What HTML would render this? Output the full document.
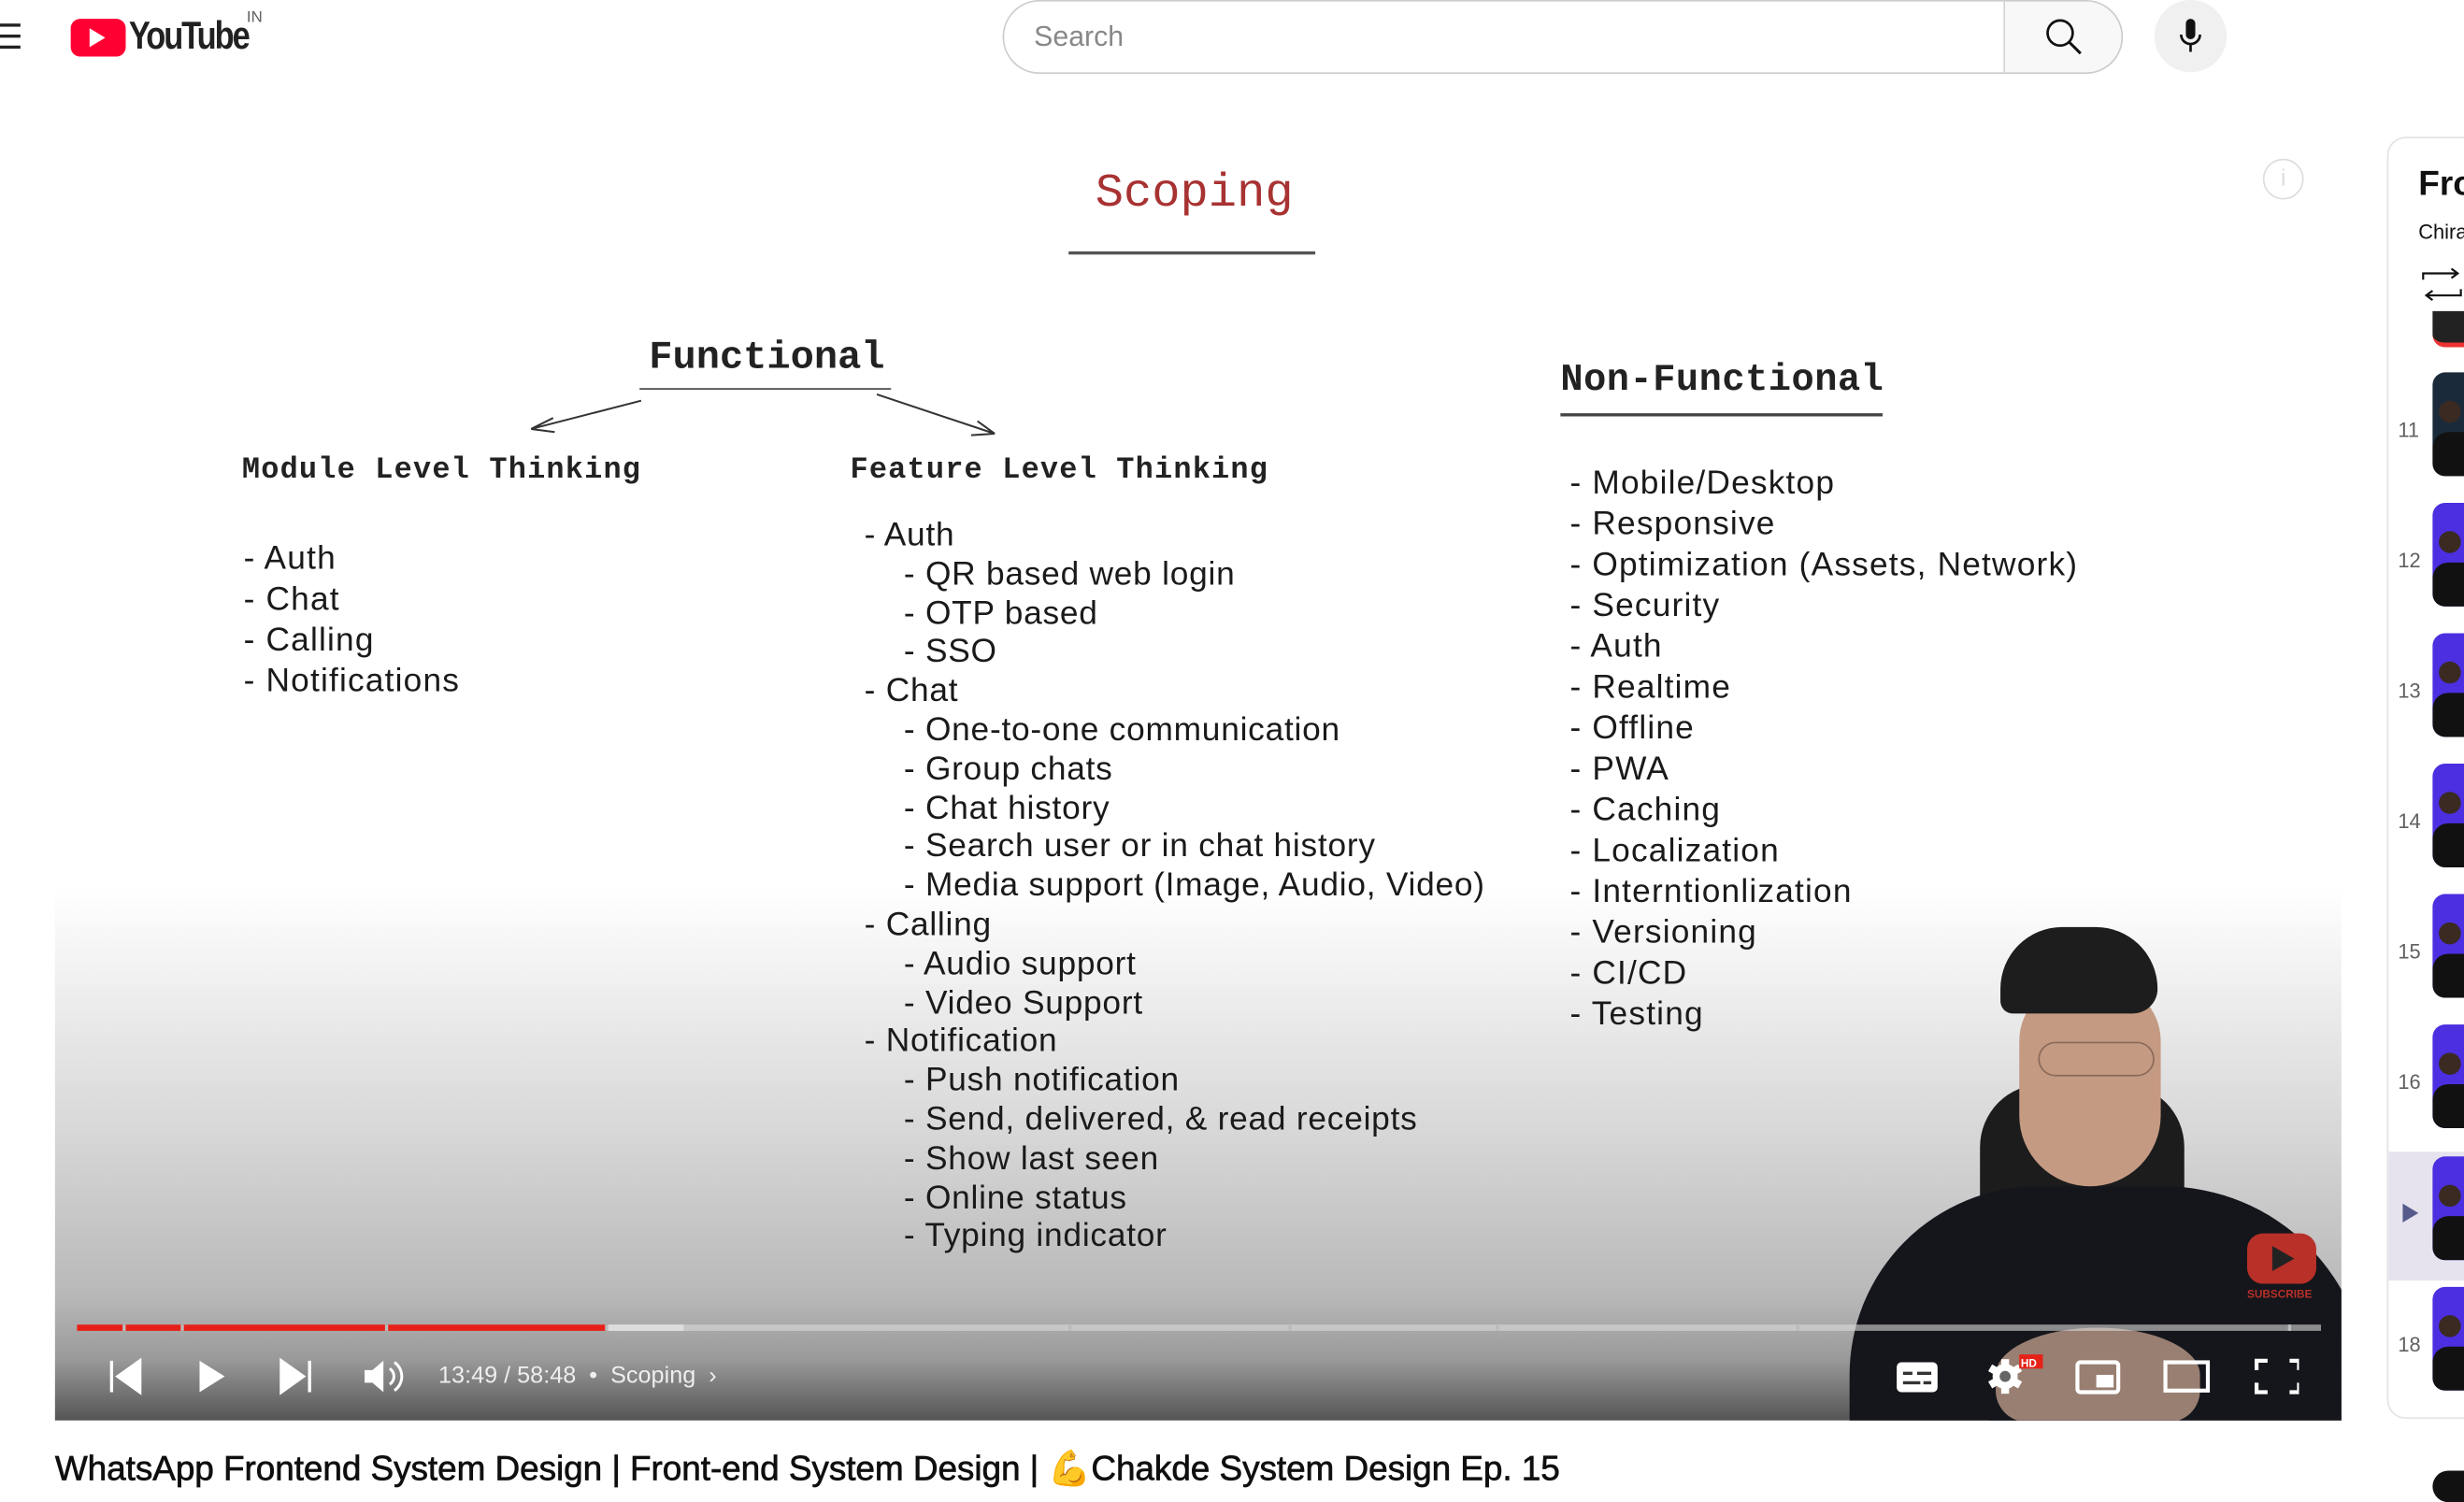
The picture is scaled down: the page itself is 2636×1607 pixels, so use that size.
<!DOCTYPE html>
<html><head><meta charset="utf-8"><style>
html,body{margin:0;padding:0;background:#fff;overflow:hidden;width:2636px;height:1590px}
#w{position:absolute;left:0;top:0;width:1568px;height:946px;transform:scale(1.68112);transform-origin:0 0;font-family:"Liberation Sans",sans-serif}
.a{position:absolute;white-space:nowrap}
.m{font-family:"Liberation Mono",monospace;color:#222;font-weight:bold}
.s{font-size:21px;color:#1a1a1a;line-height:25px;letter-spacing:.7px}
.n{position:absolute;left:1526px;font-size:13px;color:#606060}
.t{position:absolute;left:1548px;width:30px;height:66px;border-radius:8px;background:#4b2fe0;overflow:hidden}
.t i{position:absolute;left:4px;top:18px;width:14px;height:14px;border-radius:50%;background:#3a2a22}
.t b{position:absolute;left:0;bottom:0;width:30px;height:28px;background:#111;border-radius:10px 10px 0 0}
</style></head><body><div id="w">
<div class="a" style="left:0;top:15px;width:13px;height:2px;background:#222;box-shadow:0 7px 0 #222,0 14px 0 #222"></div>
<div class="a" style="left:45px;top:12px;width:35px;height:24px;background:#f03;border-radius:6px"></div>
<div class="a" style="left:57px;top:18px;width:0;height:0;border-left:10px solid #fff;border-top:6px solid transparent;border-bottom:6px solid transparent"></div>
<div class="a" style="left:82px;top:9px;font-size:25px;letter-spacing:-1.5px;color:#212121;font-weight:bold;transform:scaleX(.82);transform-origin:0 0">YouTube</div>
<div class="a" style="left:157px;top:6px;font-size:10px;color:#606060">IN</div>
<div class="a" style="left:638px;top:0;width:638px;height:47px;border:1px solid #ccc;border-radius:24px 0 0 24px;box-sizing:border-box"></div>
<div class="a" style="left:658px;top:13px;font-size:18px;color:#888">Search</div>
<div class="a" style="left:1275px;top:0;width:76px;height:47px;border:1px solid #ccc;border-left:1px solid #d3d3d3;border-radius:0 24px 24px 0;background:#f8f8f8;box-sizing:border-box"></div>
<svg class="a" style="left:1300px;top:11px" width="26" height="26" viewBox="0 0 26 26"><circle cx="11" cy="10" r="8" fill="none" stroke="#111" stroke-width="1.6"/><path d="M17 16l7 7" stroke="#111" stroke-width="1.8"/></svg>
<div class="a" style="left:1371px;top:0;width:46px;height:46px;border-radius:50%;background:#f0f0f0"></div>
<svg class="a" style="left:1384px;top:10px" width="20" height="26" viewBox="0 0 20 26"><rect x="7" y="2" width="6" height="13" rx="3" fill="#111"/><path d="M4 12a6 6 0 0 0 12 0M10 18v5" stroke="#111" stroke-width="1.6" fill="none"/></svg>
<div class="a" style="left:35px;top:85px;width:1455px;height:819px;overflow:hidden;background:linear-gradient(#fff 0,#fff 480px,#d6d6d6 640px,#b8b8b8 740px,#9a9a9a 780px,#555 819px)">
<div class="a m" style="left:662px;top:22px;font-size:30px;color:#a83232;font-weight:normal">Scoping</div>
<div class="a" style="left:645px;top:75px;width:157px;height:2px;background:#555"></div>
<div class="a" style="left:1405px;top:16px;width:24px;height:24px;border:1.5px solid #ddd;border-radius:50%;color:#ddd;font-size:15px;text-align:center;line-height:24px">i</div>
<div class="a m" style="left:378px;top:128px;font-size:25px">Functional</div>
<div class="a" style="left:372px;top:162px;width:160px;height:1px;background:#444"></div>
<svg class="a" style="left:295px;top:162px" width="310" height="35"><path d="M78 8L8 26M8 26l14-7M8 26l15 2M228 4l75 25M303 29l-15 1M303 29l-11-8" stroke="#333" stroke-width="1.2" fill="none"/></svg>
<div class="a m" style="left:958px;top:144px;font-size:24px;letter-spacing:.3px">Non-Functional</div>
<div class="a" style="left:958px;top:178px;width:205px;height:1.5px;background:#444"></div>
<div class="a m" style="left:119px;top:203px;font-size:19px;letter-spacing:.7px">Module Level Thinking</div>
<div class="a m" style="left:506px;top:203px;font-size:19px;letter-spacing:.7px">Feature Level Thinking</div>
<div class="a s" style="left:120px;top:258px;line-height:26px">- Auth<br>- Chat<br>- Calling<br>- Notifications</div>
<div class="a s" style="left:515px;top:244px;line-height:24.8px;letter-spacing:.45px">- Auth<br>&nbsp;&nbsp;&nbsp;&nbsp;- QR based web login<br>&nbsp;&nbsp;&nbsp;&nbsp;- OTP based<br>&nbsp;&nbsp;&nbsp;&nbsp;- SSO<br>- Chat<br>&nbsp;&nbsp;&nbsp;&nbsp;- One-to-one communication<br>&nbsp;&nbsp;&nbsp;&nbsp;- Group chats<br>&nbsp;&nbsp;&nbsp;&nbsp;- Chat history<br>&nbsp;&nbsp;&nbsp;&nbsp;- Search user or in chat history<br>&nbsp;&nbsp;&nbsp;&nbsp;- Media support (Image, Audio, Video)<br>- Calling<br>&nbsp;&nbsp;&nbsp;&nbsp;- Audio support<br>&nbsp;&nbsp;&nbsp;&nbsp;- Video Support<br>- Notification<br>&nbsp;&nbsp;&nbsp;&nbsp;- Push notification<br>&nbsp;&nbsp;&nbsp;&nbsp;- Send, delivered, &amp; read receipts<br>&nbsp;&nbsp;&nbsp;&nbsp;- Show last seen<br>&nbsp;&nbsp;&nbsp;&nbsp;- Online status<br>&nbsp;&nbsp;&nbsp;&nbsp;- Typing indicator</div>
<div class="a s" style="left:964px;top:210px;line-height:26px">- Mobile/Desktop<br>- Responsive<br>- Optimization (Assets, Network)<br>- Security<br>- Auth<br>- Realtime<br>- Offline<br>- PWA<br>- Caching<br>- Localization<br>- Interntionlization<br>- Versioning<br>- CI/CD<br>- Testing</div>
<div class="a" style="left:1225px;top:605px;width:130px;height:215px;background:#1c1c1c;border-radius:40px 40px 10px 10px"></div>
<div class="a" style="left:1142px;top:670px;width:330px;height:200px;background:#15161c;border-radius:120px 130px 0 0"></div>
<div class="a" style="left:1250px;top:540px;width:90px;height:130px;background:#c49a82;border-radius:40px 40px 48px 48px"></div>
<div class="a" style="left:1238px;top:505px;width:100px;height:55px;background:#1d1d1d;border-radius:50px 50px 20px 10px"></div>
<div class="a" style="left:1262px;top:578px;width:74px;height:22px;border:1.5px solid #8a6a5a;border-radius:12px;box-sizing:border-box"></div>
<div class="a" style="left:1235px;top:760px;width:130px;height:60px;background:#b99a88;border-radius:50% 50% 20px 20px;opacity:.8"></div>
<div class="a" style="left:1395px;top:700px;width:44px;height:32px;background:#b83028;border-radius:10px"></div>
<div class="a" style="left:1411px;top:708px;border-left:14px solid #222;border-top:8px solid transparent;border-bottom:8px solid transparent"></div>
<div class="a" style="left:1395px;top:736px;font-size:7px;color:#b83028;font-weight:bold">SUBSCRIBE</div>
<div class="a" style="left:14px;top:758px;width:1428px;height:4px;background:rgba(220,220,220,.6)"></div>
<div class="a" style="left:14px;top:758px;width:338px;height:4px;background:#e62117"></div>
<div class="a" style="left:352px;top:758px;width:48px;height:4px;background:#ddd"></div>
<div class="a" style="left:43px;top:758px;width:2px;height:4px;background:#bbb;box-shadow:37px 0 #bbb,167px 0 #bbb,307px 0 #bbb,602px 0 #bbb,742px 0 #bbb,874px 0 #bbb,1065px 0 #bbb,1378px 0 #bbb"></div>
<svg class="a" style="left:32px;top:778px" width="200" height="26"><path d="M4 3v20M22 3L8 13l14 10z" fill="#fff" stroke="#fff" stroke-width="2"/><path d="M60 3l16 10-16 10z" fill="#fff"/><path d="M112 3l14 10-14 10zM130 3v20" fill="#fff" stroke="#fff" stroke-width="2"/><path d="M165 9h5l7-6v20l-7-6h-5z" fill="#fff"/><path d="M181 8a6 6 0 0 1 0 10M184 4a11 11 0 0 1 0 18" stroke="#fff" stroke-width="1.8" fill="none"/></svg>
<div class="a" style="left:244px;top:782px;font-size:15px;color:#eee">13:49 / 58:48 &nbsp;•&nbsp; Scoping &nbsp;›</div>
<svg class="a" style="left:1168px;top:775px" width="260" height="30"><rect x="4" y="7" width="26" height="19" rx="3" fill="#fff"/><path d="M8 14h6M17 14h9M8 20h11M21 20h5" stroke="#333" stroke-width="2"/><g transform="translate(73 16)" fill="#fff"><circle r="8"/><rect x="-2.5" y="-11" width="5" height="22"/><rect x="-2.5" y="-11" width="5" height="22" transform="rotate(60)"/><rect x="-2.5" y="-11" width="5" height="22" transform="rotate(120)"/></g><circle cx="73" cy="16" r="3.5" fill="#666"/><rect x="82" y="2" width="15" height="9" fill="#e62117"/><text x="83" y="10" font-size="7" fill="#fff" font-family="Liberation Sans" font-weight="bold">HD</text><rect x="119" y="7" width="26" height="19" rx="2" fill="none" stroke="#fff" stroke-width="2.5"/><rect x="131" y="15" width="11" height="8" fill="#fff"/><rect x="175" y="7" width="27" height="18" fill="none" stroke="#fff" stroke-width="2.5"/><path d="M233 12V6h7M254 6h6v6M260 20v6h-6M240 26h-7v-6" stroke="#fff" stroke-width="2.5" fill="none"/></svg>
</div>
<div class="a" style="left:1519px;top:87px;width:60px;height:816px;border:1px solid #e3e3e3;border-radius:12px;box-sizing:border-box;overflow:hidden">
<div class="a" style="left:0;top:645px;width:60px;height:82px;background:#e6e3ef"></div>
</div>
<div class="a" style="left:1539px;top:104px;font-size:22px;font-weight:bold;color:#111">Fro</div>
<div class="a" style="left:1539px;top:140px;font-size:13px;color:#111">Chira</div>
<svg class="a" style="left:1540px;top:170px" width="28" height="22"><path d="M2 8V4h22M20 1l4 3-4 3M26 14v4H4M8 15l-4 3 4 3" stroke="#111" stroke-width="1.3" fill="none"/></svg>
<div class="a" style="left:1548px;top:198px;width:30px;height:20px;background:#222;border-bottom:3px solid #e33;border-radius:0 0 8px 8px"></div>
<div class="n" style="top:266px">11</div><div class="t" style="top:237px;background:#1a2a3a"><i></i><b></b></div>
<div class="n" style="top:349px">12</div><div class="t" style="top:320px"><i></i><b></b></div>
<div class="n" style="top:432px">13</div><div class="t" style="top:403px"><i></i><b></b></div>
<div class="n" style="top:515px">14</div><div class="t" style="top:486px"><i></i><b></b></div>
<div class="n" style="top:598px">15</div><div class="t" style="top:569px"><i></i><b></b></div>
<div class="n" style="top:681px">16</div><div class="t" style="top:652px"><i></i><b></b></div>
<div class="a" style="left:1529px;top:766px;border-left:10px solid #555a8a;border-top:6px solid transparent;border-bottom:6px solid transparent"></div><div class="t" style="top:736px"><i></i><b></b></div>
<div class="n" style="top:848px">18</div><div class="t" style="top:819px"><i></i><b></b></div>
<div class="a" style="left:1548px;top:936px;width:30px;height:20px;background:#111;border-radius:12px"></div>
<div class="a" style="left:35px;top:922px;font-size:22px;color:#0f0f0f;letter-spacing:-0.05px;-webkit-text-stroke:.4px #0f0f0f">WhatsApp Frontend System Design | Front-end System Design | 💪Chakde System Design Ep. 15</div>
</div></body></html>
